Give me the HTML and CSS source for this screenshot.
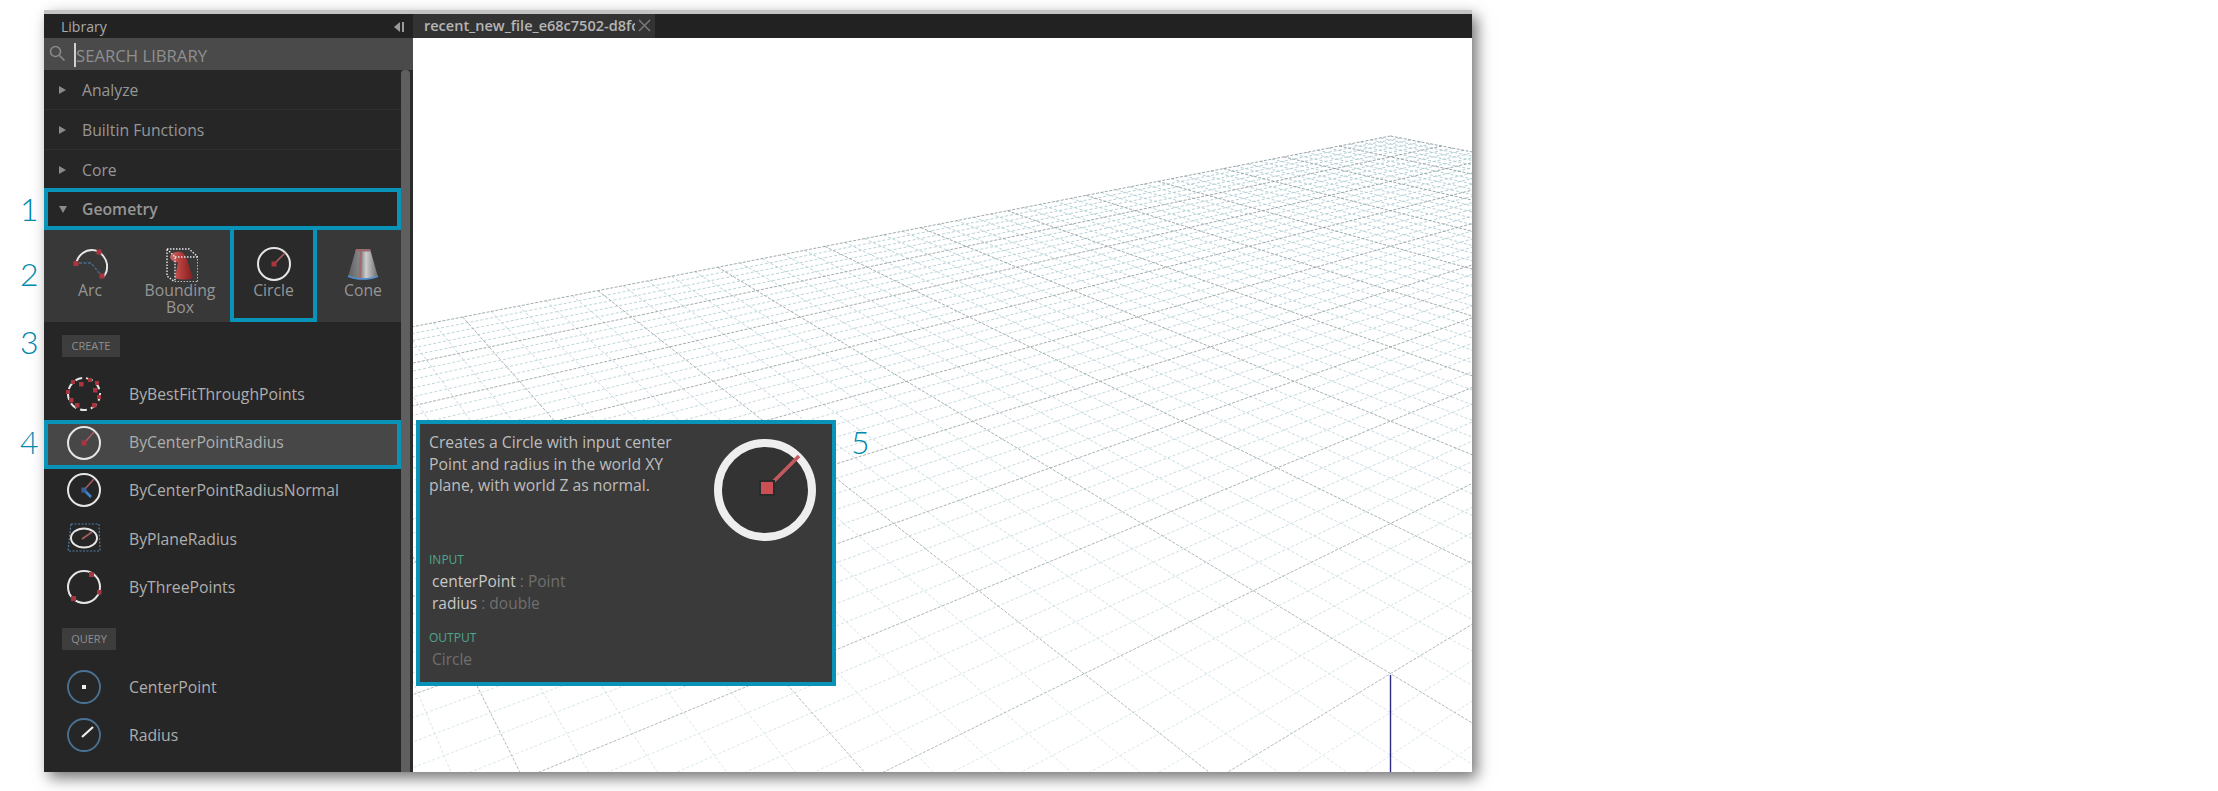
FILE: index.html
```html
<!DOCTYPE html>
<html lang="en">
  <head>
    <meta charset="UTF-8" />
    <title>Library</title>
    <link rel="stylesheet" href="styles.css">
  </head>
  <body>
    <div class="window">
      <span class="callout c1">1</span>
      <span class="callout c2">2</span>
      <span class="callout c3">3</span>
      <span class="callout c4">4</span>
      <span class="callout c5">5</span>

      <aside class="library">
        <div class="lib-head">
          <span>Library</span>
          <svg class="collapse" width="10" height="12" viewBox="0 0 10 12"><path d="M6 1v10L0 6z" fill="#9a9a9a"/><rect x="8" y="1" width="2" height="10" fill="#9a9a9a"/></svg>
        </div>
        <div class="search">
          <svg width="18" height="18" viewBox="0 0 18 18" fill="none" stroke="#8a8a8a" stroke-width="1.6"><circle cx="7.5" cy="7.5" r="5"/><path d="M11.5 11.5l5 5"/></svg>
          <span class="caret"></span>
          <span>SEARCH LIBRARY</span>
        </div>
        <div class="lib-body">
          <div class="lib-list">
            <div class="cat"><i class="arrow"></i>Analyze</div>
            <div class="cat"><i class="arrow"></i>Builtin Functions</div>
            <div class="cat"><i class="arrow"></i>Core</div>
            <div class="cat open"><i class="arrow down"></i>Geometry</div>

            <div class="tiles">
              <div class="tile">
                <svg width="36" height="36" viewBox="0 0 36 36" fill="none">
                  <path d="M4 18C6 8 14 4 20 4c9 0 16 10 15 18 0 4-2 7-4 9" stroke="#e6e6e6" stroke-width="2"/>
                  <path d="M7 17h12l10 12" stroke="#4b6c8c" stroke-width="1.300" stroke-dasharray="3 1.500"/>
                  <rect x="1.500" y="15" width="5" height="5" fill="#a8353f"/>
                  <rect x="24.500" y="3.500" width="5" height="5" fill="#a8353f"/>
                  <rect x="27.500" y="27.500" width="5" height="5" fill="#a8353f"/>
                </svg>
                Arc
              </div>
              <div class="tile tile-wide">
                <svg width="36" height="36" viewBox="0 0 36 36" fill="none">
                  <defs>
                    <linearGradient id="coneRed" x1="0" x2="1" y1="0" y2="0">
                      <stop offset="0" stop-color="#c96a68"/>
                      <stop offset=".5" stop-color="#b23a38"/>
                      <stop offset="1" stop-color="#7c2020"/>
                    </linearGradient>
                    <linearGradient id="coneGray" x1="0" x2="1" y1="0" y2="0">
                      <stop offset="0" stop-color="#5f6163"/>
                      <stop offset=".45" stop-color="#8a8c8e"/>
                      <stop offset=".6" stop-color="#d0cdcd"/>
                      <stop offset="1" stop-color="#6a6a6a"/>
                    </linearGradient>
                  </defs>
                  <path d="M8 11c1-4 6-6 11-5 3 1 5 4 6 8l6 18c-5 2-13 2-18 0l3-16c-3 1-7-1-8-5z" fill="url(#coneRed)"/>
                  <path d="M5 3h22l9 8v25H13l-8-6zM5 3l8 8v25M13 11h23" stroke="#e8e8e8" stroke-width="1.400" stroke-dasharray="1.500 1.500"/>
                </svg>
                Bounding Box
              </div>
              <div class="tile picked">
                <svg width="36" height="36" viewBox="0 0 36 36" fill="none">
                  <circle cx="18" cy="18" r="16" stroke="#e6e6e6" stroke-width="2"/>
                  <path d="M18 18L29 7" stroke="#a85c5f" stroke-width="1.600"/>
                  <rect x="15.500" y="15.500" width="5" height="5" fill="#a8353f"/>
                </svg>
                Circle
              </div>
              <div class="tile tile-end">
                <svg width="36" height="36" viewBox="0 0 36 36" fill="none">
                  <path d="M11 3h14l8 28c-8 3-22 3-30 0z" fill="url(#coneGray)"/>
                  <path d="M15 3h2l-1 30h-2.500z" fill="#a06a6e"/>
                  <path d="M11 3h14l.600 2.500H10.400z" fill="#9a6a6e"/>
                  <path d="M3 30c8 4 22 4 30 0" stroke="#4f8fd0" stroke-width="1.600"/>
                </svg>
                Cone
              </div>
            </div>

            <span class="tag tag-create">CREATE</span>
            <div class="row">
              <svg width="36" height="36" viewBox="0 0 36 36" fill="none">
                <circle cx="18" cy="18" r="16" stroke="#e6e6e6" stroke-width="2" stroke-dasharray="7 4"/>
                <g fill="#a8353f">
                  <rect x="13" y="6" width="4.500" height="4.500"/><rect x="22" y="2" width="4" height="4"/><rect x="29" y="5" width="4" height="4"/>
                  <rect x="27" y="12" width="4.500" height="4.500"/><rect x="31" y="19" width="4" height="4"/><rect x="26" y="27" width="4.500" height="4.500"/>
                  <rect x="9" y="27" width="4.500" height="4.500"/><rect x="3" y="22" width="4.500" height="4.500"/><rect x="0" y="14" width="4" height="4"/><rect x="5" y="4" width="4" height="4"/>
                </g>
              </svg>
              ByBestFitThroughPoints
            </div>
            <div class="row selected">
              <svg width="36" height="36" viewBox="0 0 36 36" fill="none">
                <circle cx="18" cy="18" r="16" stroke="#e6e6e6" stroke-width="2"/>
                <path d="M18 18L28 7" stroke="#a85c5f" stroke-width="1.600"/>
                <rect x="15.500" y="15.500" width="5" height="5" fill="#a8353f"/>
              </svg>
              ByCenterPointRadius
            </div>
            <div class="row">
              <svg width="36" height="36" viewBox="0 0 36 36" fill="none">
                <circle cx="18" cy="18" r="16" stroke="#e6e6e6" stroke-width="2"/>
                <path d="M18 18L28 7" stroke="#a85c5f" stroke-width="1.600"/>
                <path d="M18 18l7 7" stroke="#3f83c9" stroke-width="2.600"/>
                <rect x="15.500" y="15.500" width="5" height="5" fill="#3f5f9a"/>
              </svg>
              ByCenterPointRadiusNormal
            </div>
            <div class="row">
              <svg width="36" height="36" viewBox="0 0 36 36" fill="none">
                <path d="M5 3h28l1 27H2z" stroke="#4f7ea8" stroke-width="1.200" stroke-dasharray="2 1.500"/>
                <ellipse cx="18" cy="17" rx="13" ry="9.500" stroke="#e6e6e6" stroke-width="2"/>
                <path d="M16 18l10-7" stroke="#a85c5f" stroke-width="1.600"/>
              </svg>
              ByPlaneRadius
            </div>
            <div class="row">
              <svg width="36" height="36" viewBox="0 0 36 36" fill="none">
                <circle cx="18" cy="18" r="16" stroke="#e6e6e6" stroke-width="2"/>
                <g fill="#a8353f">
                  <rect x="23" y="3" width="5" height="5"/><rect x="31" y="21" width="4.500" height="4.500"/><rect x="5" y="27" width="5" height="5"/>
                </g>
              </svg>
              ByThreePoints
            </div>

            <span class="tag tag-query">QUERY</span>
            <div class="row">
              <svg width="36" height="36" viewBox="0 0 36 36" fill="none">
                <circle cx="18" cy="18" r="16" stroke="#4a7396" stroke-width="1.800"/>
                <rect x="16" y="16" width="4" height="4" fill="#eee"/>
              </svg>
              CenterPoint
            </div>
            <div class="row">
              <svg width="36" height="36" viewBox="0 0 36 36" fill="none">
                <circle cx="18" cy="18" r="16" stroke="#4a7396" stroke-width="1.800"/>
                <path d="M16 20l11-10" stroke="#eee" stroke-width="2.200"/>
              </svg>
              Radius
            </div>
          </div>
          <div class="scrollbar"></div>
        </div>
      </aside>

      <main class="workspace">
        <div class="tabbar">
          <div class="tab">
            <span class="tab-name">recent_new_file_e68c7502-d8fc</span>
            <svg width="13" height="13" viewBox="0 0 13 13" stroke="#777" stroke-width="1.600"><path d="M1 1l11 11M12 1L1 12"/></svg>
          </div>
        </div>
        <svg id="grid" class="grid" viewBox="413 38 1059 734">
          <defs>
            <linearGradient id="minorFade" gradientUnits="userSpaceOnUse" x1="0" y1="130" x2="0" y2="772">
              <stop offset="0" stop-color="#a9c8cf"/>
              <stop offset="1" stop-color="#d6e5e8"/>
            </linearGradient>
            <linearGradient id="majorFade" gradientUnits="userSpaceOnUse" x1="0" y1="130" x2="0" y2="772">
              <stop offset="0" stop-color="#7f8f93"/>
              <stop offset="1" stop-color="#a0abae"/>
            </linearGradient>
          </defs>
        </svg>
      </main>

      <div class="tooltip">
        <div class="tip-head">
          <p class="tip-desc">Creates a Circle with input center Point and radius in the world XY plane, with world Z as normal.</p>
          <svg width="110" height="110" viewBox="0 0 110 110" fill="none">
            <circle cx="55" cy="55" r="47" stroke="#eeeeee" stroke-width="8" fill="#333"/>
            <path d="M57 53L89 21" stroke="#c45a5f" stroke-width="3.500"/>
            <rect x="49" y="45" width="16" height="16" fill="#2b2b2b"/>
            <rect x="51" y="47" width="12" height="12" fill="#cc4f55"/>
          </svg>
        </div>
        <div class="tip-label">INPUT</div>
        <div class="tip-line">centerPoint <span class="dim">: Point</span></div>
        <div class="tip-line">radius <span class="dim">: double</span></div>
        <div class="tip-label tip-output">OUTPUT</div>
        <div class="tip-line dim">Circle</div>
      </div>
    </div>

    <script src="grid.js"></script>
  </body>
</html>
```

FILE: styles.css
```css
* {
  box-sizing: border-box;
  margin: 0;
  padding: 0;
}

body {
  background: white;
  font-family: "Open Sans", sans-serif;
  overflow: hidden;
  height: 791px;
  padding: 10px 0 0 44px;
}

.window {
  position: relative;
  display: flex;
  width: 1428px;
  height: 762px;
  border-top: 4px solid #777;
  border-image: linear-gradient(#c4c4c4, #3a3a3a) 1;
  background: #222;
  box-shadow: 5px 6px 14px rgba(0, 0, 0, 0.55);
}

.callout {
  position: absolute;
  left: -24px;
  font-family: "Lato", sans-serif;
  font-size: 32px;
  font-weight: 300;
  line-height: 40px;
  color: #0088ad;
}

.c1 { top: 175px; }
.c2 { top: 240px; }
.c3 { top: 308px; }
.c4 { top: 408px; }
.c5 { top: 408px; left: 807px; }

.library {
  width: 369px;
  flex: none;
  display: flex;
  flex-direction: column;
  background: #262626;
  color: #999;
}

.lib-head {
  height: 24px;
  flex: none;
  display: flex;
  align-items: center;
  justify-content: space-between;
  padding: 1px 9px 0 17px;
  background: #222;
  font-size: 14px;
  color: #aaa;
}

.search {
  height: 32px;
  flex: none;
  display: flex;
  align-items: center;
  gap: 8px;
  padding: 2px 0 0 4px;
  background: #4a4a4a;
  font-size: 16.700px;
  color: #8f8f8f;
}

.search svg {
  margin-top: -4px;
}

.caret {
  width: 2px;
  height: 24px;
  margin-right: -8px;
  background: #d0d0d0;
}

.lib-body {
  flex: 1;
  display: flex;
  min-height: 0;
  border-right: 3px solid #2b2b2b;
}

.lib-list {
  flex: 1;
  min-width: 0;
}

.scrollbar {
  width: 9px;
  flex: none;
  background: #5f5f5f;
  border-radius: 4px 4px 0 0;
}

.cat {
  height: 40px;
  display: flex;
  align-items: center;
  padding-left: 15px;
  border-bottom: 1px solid #2f2f2f;
  font-size: 15.750px;
  color: #969696;
}

.arrow {
  width: 0;
  height: 0;
  margin-right: 16px;
  border-left: 7px solid #8a8a8a;
  border-top: 4px solid transparent;
  border-bottom: 4px solid transparent;
}

.arrow.down {
  border-left: 4px solid transparent;
  border-right: 4px solid transparent;
  border-top: 7px solid #8a8a8a;
  border-bottom: 0;
  margin-right: 15px;
}

.cat.open {
  height: 42px;
  margin-top: -2px;
  padding-left: 11px;
  border: 4px solid #0a93b8;
  font-weight: 600;
  position: relative;
}

.tiles {
  height: 92px;
  display: grid;
  grid-template-columns: 92px 94px 87px 84px;
  background: #383838;
}

.tile {
  display: flex;
  flex-direction: column;
  align-items: center;
  padding-top: 16px;
  font-size: 15.750px;
  line-height: 17px;
  text-align: center;
  color: #969696;
}

.tile svg {
  flex: none;
}

.tile-wide {
  padding-right: 6px;
}

.tile-end {
  padding-left: 8px;
}

.tile.picked {
  border: 4px solid #0a93b8;
  border-top: 0;
  background: #2a2a2a;
}

.tag {
  display: block;
  width: 58px;
  height: 22px;
  margin: 13px 0 13px 18px;
  background: #3d3d3d;
  font-size: 11px;
  line-height: 22px;
  text-align: center;
  color: #8f8f8f;
}

.tag-query {
  width: 54px;
  margin-top: 16px;
}

.row {
  height: 48.500px;
  display: flex;
  align-items: center;
  gap: 27px;
  padding-left: 22px;
  font-size: 15.750px;
  color: #aeaeae;
}

.row.selected {
  height: 49px;
  margin-top: 1px;
  margin-bottom: -2.500px;
  padding: 0 0 5px 18px;
  border: 4px solid #0a93b8;
  background: #474747;
}

.row.selected svg {
  margin-top: 2px;
}

.row svg {
  flex: none;
}

.workspace {
  flex: 1;
  min-width: 0;
  display: flex;
  flex-direction: column;
}

.tabbar {
  height: 24px;
  flex: none;
  background: #222;
}

.tab {
  width: 242px;
  height: 24px;
  display: flex;
  align-items: center;
  gap: 3px;
  padding: 0 0 2px 11px;
  background: #333;
}

.tab-name {
  width: 211px;
  overflow: hidden;
  white-space: nowrap;
  font-size: 14.500px;
  font-weight: 600;
  color: #b5b5b5;
}

.grid {
  flex: 1;
  display: block;
  width: 100%;
  min-height: 0;
  background: white;
}

.tooltip {
  position: absolute;
  left: 372px;
  top: 406px;
  width: 420px;
  height: 266px;
  padding: 8px 12px 0 9px;
  border: 4px solid #0a93b8;
  background: #3a3a3a;
  font-size: 15.750px;
  color: #bdbdbd;
}

.tip-head {
  display: flex;
  justify-content: space-between;
  height: 112px;
}

.tip-head svg {
  margin-top: 3px;
  flex: none;
}

.tip-desc {
  width: 262px;
  line-height: 21.500px;
}

.tip-label {
  height: 16px;
  margin-top: 8px;
  font-size: 12px;
  line-height: 16px;
  color: #4ea68e;
}

.tip-line {
  height: 21.500px;
  padding-left: 3px;
  font-size: 15.500px;
  line-height: 21.500px;
  color: #c8c8c8;
}

.tip-label + .tip-line {
  margin-top: 3px;
}

.tip-output {
  margin-top: 16px;
}

.dim {
  color: #6f6f6f;
}
```

FILE: grid.js
```js
// ground grid: two line families running to vanishing points on the horizon
const svg = document.getElementById("grid");
const NS = "http://www.w3.org/2000/svg";

const axisX = 1390.5;
const horizon = -120;
const vpLeft = [77, horizon];
const vpRight = [2703, horizon];
const PER_MAJOR = 5;
const MAJORS = 13;

// where grid line n crosses the centre diagonal
function axisY(n) {
  return horizon + 1 / (0.003906 - 0.000294 * (n / PER_MAJOR));
}

function meet(i, j) {
  const yi = axisY(i);
  const yj = axisY(j);
  const mi = (yi - vpRight[1]) / (axisX - vpRight[0]);
  const mj = (yj - vpLeft[1]) / (axisX - vpLeft[0]);
  const x = (yj - yi + mi * axisX - mj * axisX) / (mi - mj);
  return [x, yi + mi * (x - axisX)];
}

function addLine(a, b, major) {
  const line = document.createElementNS(NS, "line");
  line.setAttribute("x1", a[0]);
  line.setAttribute("y1", a[1]);
  line.setAttribute("x2", b[0]);
  line.setAttribute("y2", b[1]);
  line.setAttribute("stroke", major ? "url(#majorFade)" : "url(#minorFade)");
  line.setAttribute("stroke-width", major ? 0.8 : 0.9);
  line.setAttribute("stroke-dasharray", major ? "3 1.5" : "3 2");
  svg.appendChild(line);
}

const last = MAJORS * PER_MAJOR;
for (let pass = 0; pass < 2; pass++) {
  for (let n = 0; n <= last; n++) {
    const major = n % PER_MAJOR === 0;
    if (major !== (pass === 1)) continue;
    addLine(meet(n, 0), meet(n, last), major);
    addLine(meet(0, n), meet(last, n), major);
  }
}

// z axis
const axis = document.createElementNS(NS, "line");
axis.setAttribute("x1", axisX);
axis.setAttribute("y1", 675);
axis.setAttribute("x2", axisX);
axis.setAttribute("y2", 772);
axis.setAttribute("stroke", "#2a2a80");
axis.setAttribute("stroke-width", 1.4);
svg.appendChild(axis);
```
